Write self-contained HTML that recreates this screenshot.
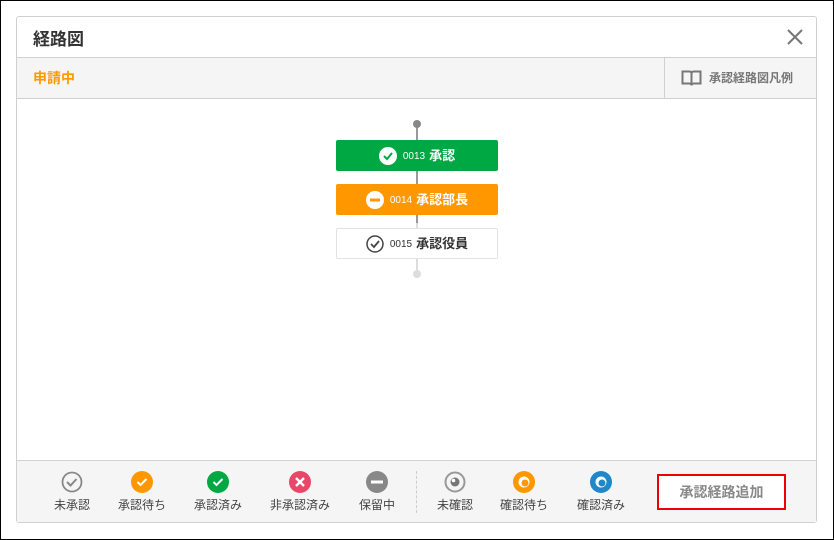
<!DOCTYPE html>
<html><head><meta charset="utf-8"><style>
*{box-sizing:border-box;margin:0;padding:0}
body{width:834px;height:540px;background:#fff;border:1px solid #000;position:relative;font-family:"Liberation Sans","Noto Sans CJK JP",sans-serif;overflow:hidden}
.m{position:absolute;left:15px;top:15px;width:801px;height:507px;border:1px solid #d0d0d0;border-radius:3px;background:#fff}
.hd{position:absolute;left:0;top:0;width:799px;height:41px;border-bottom:1px solid #d0d0d0}
.hd .t{position:absolute;left:16px;top:8px;font-size:17px;font-weight:bold;color:#333}
.sub{position:absolute;left:0;top:41px;width:799px;height:41px;background:#f5f5f5;border-bottom:1px solid #d0d0d0}
.sub .s{position:absolute;left:16px;top:10px;font-size:14px;font-weight:bold;color:#f90}
.leg{position:absolute;left:647px;top:0;width:152px;height:40px;border-left:1px solid #d0d0d0;font-size:12px;color:#777;font-weight:bold}
.line{position:absolute;left:399px;top:106px;width:2px;height:151px;background:#ddd}
.line1{position:absolute;left:399px;top:106px;width:2px;height:100px;background:#999}
.dot{position:absolute;width:8px;height:8px;border-radius:50%}
.node{position:absolute;left:319px;width:162px;height:31px;border-radius:2px;display:flex;align-items:center;justify-content:center;font-weight:bold;font-size:13px;line-height:16px}
.node small{font-size:10px;font-weight:normal;margin:2px 4px 0 6px;line-height:12px}
.ft{position:absolute;left:0;top:443px;width:799px;height:62px;background:#f5f5f5;border-top:1px solid #d0d0d0}
.it{position:absolute;top:10px;width:80px;text-align:center;font-size:12px;color:#444}
.it svg{display:block;margin:0 auto 3px}
.btn{position:absolute;left:640px;top:13px;width:129px;height:36px;border:2px solid #e00;background:#fff;color:#888;font-weight:bold;font-size:14px;text-align:center;line-height:32px}
</style></head><body>
<div class="m">
 <div class="hd"><div class="t">経路図</div>
  <svg style="position:absolute;left:769px;top:11px" width="18" height="18"><path d="M2 2L16 16M16 2L2 16" stroke="#777" stroke-width="2"/></svg></div>
 <div class="sub"><div class="s">申請中</div>
  <div class="leg"><svg style="position:absolute;left:16px;top:11px" width="21" height="18"><path d="M1.5 2.5h7q2 0 2 2v12q0-2-2-2h-7zM19.5 2.5h-7q-2 0-2 2v12q0-2 2-2h7z" fill="none" stroke="#777" stroke-width="2"/></svg><span style="position:absolute;left:44px;top:11px">承認経路図凡例</span></div></div>
 <div class="line"></div><div class="line1"></div>
 <div class="dot" style="left:396px;top:103px;background:#888"></div>
 <div class="dot" style="left:396px;top:253px;background:#ddd"></div>
 <div class="node" style="top:123px;background:#00a844;color:#fff"><svg width="18" height="18"><circle cx="9" cy="9" r="9" fill="#fff"/><path d="M5 9l3 3 5-6" stroke="#00a844" stroke-width="2" fill="none"/></svg><small>0013</small>承認</div>
 <div class="node" style="top:167px;background:#ff9800;color:#fff"><svg width="18" height="18"><circle cx="9" cy="9" r="9" fill="#fff"/><rect x="4" y="7.5" width="10" height="3" fill="#ff9800"/></svg><small>0014</small>承認部長</div>
 <div class="node" style="top:211px;background:#fff;border:1px solid #e3e3e3;color:#333"><svg width="18" height="18"><circle cx="9" cy="9" r="8" fill="none" stroke="#444" stroke-width="1.5"/><path d="M5 9l3 3 5-6" stroke="#444" stroke-width="1.8" fill="none"/></svg><small>0015</small>承認役員</div>
 <div class="ft">
  <div class="it" style="left:15px"><svg width="22" height="22"><circle cx="11" cy="11" r="9.5" fill="none" stroke="#888" stroke-width="1.8"/><path d="M6 11l3.5 3.5 6-6.5" stroke="#888" stroke-width="2" fill="none"/></svg>未承認</div>
  <div class="it" style="left:85px"><svg width="22" height="22"><circle cx="11" cy="11" r="11" fill="#ff9800"/><path d="M6.5 11l3 3 6-6" stroke="#fff" stroke-width="2" fill="none"/></svg>承認待ち</div>
  <div class="it" style="left:161px"><svg width="22" height="22"><circle cx="11" cy="11" r="11" fill="#00a844"/><path d="M6.5 11l3 3 6-6" stroke="#fff" stroke-width="2" fill="none"/></svg>承認済み</div>
  <div class="it" style="left:243px"><svg width="22" height="22"><circle cx="11" cy="11" r="11" fill="#e8476a"/><path d="M7 7l8 8M15 7l-8 8" stroke="#fff" stroke-width="2.4"/></svg>非承認済み</div>
  <div class="it" style="left:320px"><svg width="22" height="22"><circle cx="11" cy="11" r="11" fill="#888"/><rect x="5" y="9.5" width="12" height="3" fill="#fff"/></svg>保留中</div>
  <div style="position:absolute;left:399px;top:10px;height:42px;border-left:1px dashed #ccc"></div>
  <div class="it" style="left:398px"><svg width="22" height="22"><circle cx="11" cy="11" r="9.5" fill="none" stroke="#999" stroke-width="2"/><circle cx="11" cy="11" r="4.5" fill="#777"/><circle cx="9.5" cy="9.5" r="1.8" fill="#fff"/></svg>未確認</div>
  <div class="it" style="left:467px"><svg width="22" height="22"><circle cx="11" cy="11" r="11" fill="#ff9800"/><circle cx="11" cy="11" r="5.5" fill="#fff"/><circle cx="12" cy="12" r="3.5" fill="#ff9800"/></svg>確認待ち</div>
  <div class="it" style="left:544px"><svg width="22" height="22"><circle cx="11" cy="11" r="11" fill="#1e88c8"/><circle cx="11" cy="11" r="5.5" fill="#fff"/><circle cx="12" cy="12" r="3.5" fill="#1e88c8"/></svg>確認済み</div>
  <div class="btn">承認経路追加</div>
 </div>
</div>
</body></html>
